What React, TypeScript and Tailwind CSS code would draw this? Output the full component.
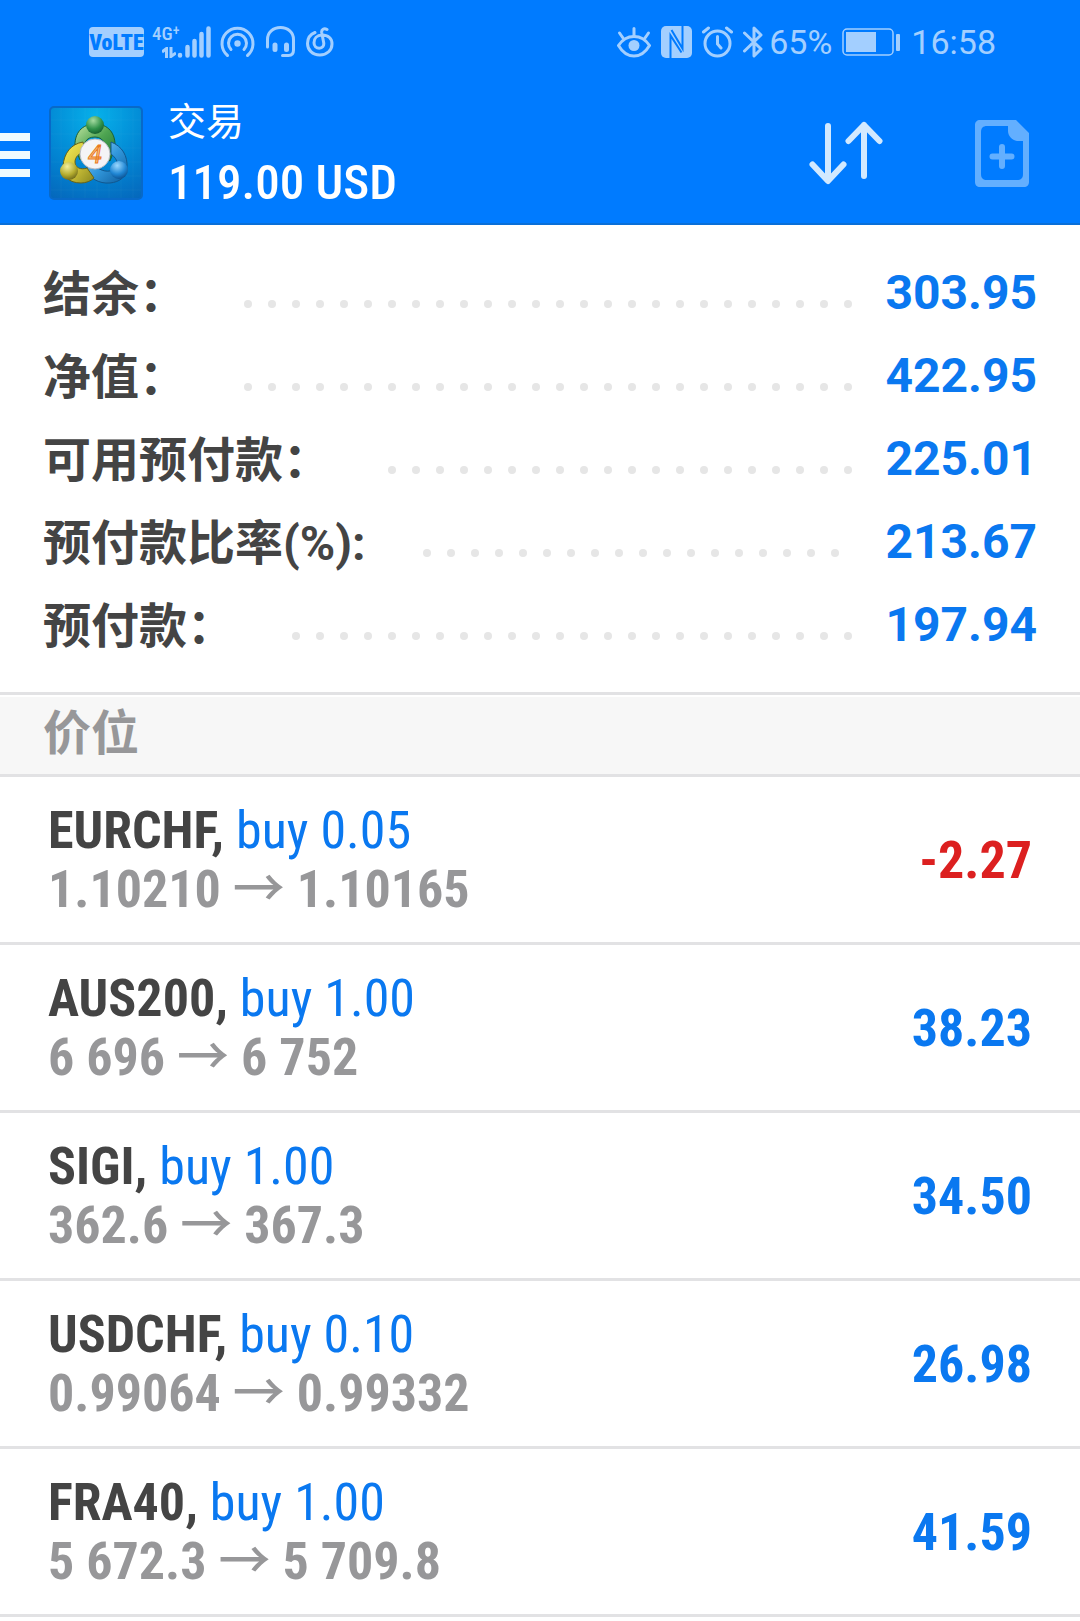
interface BalanceItem {
  label: string;
  value: string;
}

interface Position {
  symbol: string;
  volume: string;
  open: string;
  current: string;
  profit: string;
}

const balance: BalanceItem[] = [
  { label: "结余：", value: "303.95" },
  { label: "净值：", value: "422.95" },
  { label: "可用预付款：", value: "225.01" },
  { label: "预付款比率(%):", value: "213.67" },
  { label: "预付款：", value: "197.94" },
];

const positions: Position[] = [
  { symbol: "EURCHF", volume: "0.05", open: "1.10210", current: "1.10165", profit: "-2.27" },
  { symbol: "AUS200", volume: "1.00", open: "6 696", current: "6 752", profit: "38.23" },
  { symbol: "SIGI", volume: "1.00", open: "362.6", current: "367.3", profit: "34.50" },
  { symbol: "USDCHF", volume: "0.10", open: "0.99064", current: "0.99332", profit: "26.98" },
  { symbol: "FRA40", volume: "1.00", open: "5 672.3", current: "5 709.8", profit: "41.59" },
];

const DataArrowsIcon = () => (
  <svg width="14" height="11" viewBox="0 0 14 11" fill="none" stroke="currentColor" strokeWidth="3">
    <path d="M0 5 4.500 1.500V11M9 0v9.500L14 6" />
  </svg>
);

const SignalIcon = () => (
  <svg width="36" height="32" viewBox="0 0 36 32" fill="none" stroke="currentColor" strokeLinecap="round">
    <path strokeWidth="4.500" d="M4 29v.5M11.500 21v8.500M18.500 15v14.500M25.500 8v21.500M32.500 2.500v27" />
  </svg>
);

const HotspotIcon = () => (
  <svg width="35" height="32" viewBox="0 0 35 32" fill="none" stroke="currentColor" strokeWidth="3" strokeLinecap="round">
    <path d="M7.500 29.500a15.500 15.500 0 1 1 20 0" />
    <path d="M11 23.500a9 9 0 1 1 13 0" />
    <circle cx="17.500" cy="17.500" r="3.200" fill="currentColor" stroke="none" />
  </svg>
);

const HeadsetIcon = () => (
  <svg width="29" height="32" viewBox="0 0 29 32" fill="none" stroke="currentColor" strokeLinecap="round">
    <path strokeWidth="3" d="M1.500 21V13.500C1.500 6.500 7 1.500 14.500 1.500S27.500 6.500 27.500 13.500V24c0 3.500-2 5.500-5 5.500h-6" />
    <path strokeWidth="5" d="M9 19v4.500M20.500 19v4.500" />
  </svg>
);

const MusicIcon = () => (
  <svg width="28" height="30" viewBox="0 0 28 30" fill="none" stroke="currentColor" strokeWidth="3" strokeLinecap="round">
    <path d="M9 5.500C4 7.500 1.500 11.500 1.500 16.500c0 6.500 5 11.500 12.300 11.500S26 23 26 17c0-5.500-4-9-10-9-5 0-8 3.500-8 7.800 0 3.200 2.200 5.400 5.300 5.400s4.900-2.400 4.400-5.400L15.700 5.500c-.4-3 2.300-4.800 5.300-3" />
  </svg>
);

const EyeIcon = () => (
  <svg width="34" height="31" viewBox="0 0 34 31" fill="none" stroke="currentColor" strokeWidth="3" strokeLinecap="round">
    <path d="M1.500 18.500C5 13 10.500 9.500 17 9.500s12 3.500 15.500 9c-3.500 6-9 10.500-15.500 10.500S5 24.500 1.500 18.500z" />
    <circle cx="17" cy="18.500" r="5.500" fill="currentColor" stroke="none" />
    <path d="M17 9V1.500M6 11 2.500 6M28 11l3.500-5" />
  </svg>
);

const NfcIcon = () => (
  <svg width="31" height="32" viewBox="0 0 31 32" fill="none">
    <rect width="31" height="32" rx="5" fill="currentColor" />
    <path d="M9.500 32V9.500L20.500 26.500" stroke="#007bff" strokeWidth="2" />
    <path d="M21.500 0v22.500L10.500 4" stroke="#007bff" strokeWidth="2" />
  </svg>
);

const AlarmIcon = () => (
  <svg width="31" height="32" viewBox="0 0 31 32" fill="none" stroke="currentColor" strokeWidth="3" strokeLinecap="round">
    <circle cx="15.500" cy="17.500" r="12.500" />
    <path d="M15.500 10.500v7.500l3.500 4M1.500 6l5-4M29.500 6l-5-4" />
  </svg>
);

const BluetoothIcon = () => (
  <svg width="20" height="32" viewBox="0 0 20 32" fill="none" stroke="currentColor" strokeWidth="3" strokeLinejoin="round" strokeLinecap="round">
    <path d="M1.500 7 18 23l-7 7V2l7 7L1.500 25" />
  </svg>
);

const BatteryIcon = () => (
  <svg width="59" height="28" viewBox="0 0 59 28" fill="none">
    <rect x="1" y="1" width="50" height="26" rx="4" stroke="currentColor" strokeWidth="1.500" />
    <rect x="4" y="4" width="30" height="20" fill="currentColor" />
    <rect x="54" y="6" width="4" height="17" rx="1" fill="currentColor" />
  </svg>
);

const AppLogo = () => (
  <svg width="94" height="94" viewBox="0 0 94 94" className="shrink-0" aria-label="MetaTrader 4">
    <defs>
      <radialGradient id="tile" cx="0.5" cy="0.1" r="1">
        <stop offset="0" stopColor="#06b0ea" />
        <stop offset="0.6" stopColor="#0284d2" />
        <stop offset="1" stopColor="#0568bc" />
      </radialGradient>
      <linearGradient id="green" x1="0" y1="0" x2="1" y2="1">
        <stop offset="0" stopColor="#c4e6a4" />
        <stop offset="0.5" stopColor="#4fa552" />
        <stop offset="1" stopColor="#1d7434" />
      </linearGradient>
      <linearGradient id="yellow" x1="0" y1="0" x2="1" y2="1">
        <stop offset="0" stopColor="#f8ee58" />
        <stop offset="0.5" stopColor="#d2c53a" />
        <stop offset="1" stopColor="#88861f" />
      </linearGradient>
      <linearGradient id="blue" x1="0" y1="0" x2="1" y2="1">
        <stop offset="0" stopColor="#a0dafa" />
        <stop offset="0.5" stopColor="#3298dc" />
        <stop offset="1" stopColor="#0b5a9c" />
      </linearGradient>
      <radialGradient id="greenHead" cx="0.4" cy="0.25" r="0.8">
        <stop offset="0" stopColor="#a5dba0" />
        <stop offset="0.6" stopColor="#2f9149" />
        <stop offset="1" stopColor="#14592b" />
      </radialGradient>
      <radialGradient id="yellowHead" cx="0.4" cy="0.25" r="0.8">
        <stop offset="0" stopColor="#f4ef9a" />
        <stop offset="0.6" stopColor="#b3ab2e" />
        <stop offset="1" stopColor="#66621a" />
      </radialGradient>
      <radialGradient id="blueHead" cx="0.4" cy="0.25" r="0.8">
        <stop offset="0" stopColor="#9ad8ff" />
        <stop offset="0.6" stopColor="#1f86d4" />
        <stop offset="1" stopColor="#0b4c8a" />
      </radialGradient>
    </defs>
    <rect x="1" y="1" width="92" height="92" rx="4" fill="url(#tile)" stroke="#0869c8" strokeWidth="2" />
    <path d="M12 2v90M24 2v90M36 2v90M48 2v90M60 2v90M72 2v90M84 2v90M2 14h90M2 28h90M2 42h90M2 56h90M2 70h90M2 84h90" stroke="#ffffff" strokeOpacity="0.03" />
    <path d="M26 42C25 27 33 18 46 18s21 9 20 24l-5 13-7-3c4-11 2-21-8-21s-12 7-10 18l-5 5z" fill="url(#green)" stroke="#1c5f35" />
    <path d="M62 36c11 4 17 14 16 26-1 9-7 14-17 15-11 1-21-5-25-14l8-6c5 7 13 10 20 7 6-3 6-10-2-16z" fill="url(#blue)" stroke="#12578e" />
    <path d="M34 36c-12 2-19 11-20 24-1 10 6 17 18 17 5 0 10-2 13-5l-7-10c-6 2-12 0-12-6 0-5 4-9 10-10z" fill="url(#yellow)" stroke="#656219" />
    <circle cx="46" cy="19" r="9" fill="url(#greenHead)" />
    <circle cx="20" cy="65" r="9" fill="url(#yellowHead)" />
    <circle cx="70" cy="64" r="9" fill="url(#blueHead)" />
    <circle cx="46" cy="48" r="15" fill="#f4f4f6" stroke="#b9bcc4" />
    <text x="46" y="57" textAnchor="middle" fontSize="25" fontStyle="italic" fill="#f9c58a" stroke="#ea7a1c" fontFamily="Roboto, sans-serif">
      4
    </text>
  </svg>
);

const StatusBar = () => (
  <div className="flex h-[84px] items-center justify-between pr-[84px] pl-[89px] text-[#a3cfff]">
    <div className="flex items-center">
      <span className="flex h-[30px] w-[55px] items-center justify-center rounded-sm bg-[#a3cfff] pt-0.5 font-['Roboto_Condensed',Roboto,sans-serif] text-[22px] leading-[28px] font-black text-[#007bff]">
        VoLTE
      </span>
      <div className="ml-2 flex h-8 items-end">
        <div className="flex h-8 w-[24px] flex-col items-end justify-between">
          <span className="flex w-[24px] items-start font-['Roboto_Condensed',Roboto,sans-serif] text-[19px] leading-[16px] font-medium">
            4G<span className="text-[14px] leading-[8px]">+</span>
          </span>
          <DataArrowsIcon />
        </div>
        <SignalIcon />
      </div>
      <div className="ml-2 flex items-center gap-[11px]">
        <HotspotIcon />
        <HeadsetIcon />
        <MusicIcon />
      </div>
    </div>
    <div className="flex items-center gap-2.5">
      <EyeIcon />
      <NfcIcon />
      <AlarmIcon />
      <div className="flex items-center gap-1.5">
        <BluetoothIcon />
        <span className="text-[34px]">65%</span>
      </div>
      <BatteryIcon />
      <span className="text-[34px]">16:58</span>
    </div>
  </div>
);

const Header = () => (
  <header className="border-b-2 border-[#0a6fd8] bg-[#007bff] text-white">
    <StatusBar />
    <div className="flex h-[139px] items-start">
      <button type="button" aria-label="Menu" className="mt-[49px] flex w-[30px] flex-col gap-2.5">
        <span className="h-2 w-full bg-[#f0fbff]" />
        <span className="h-2 w-full bg-[#f0fbff]" />
        <span className="h-2 w-full bg-[#f0fbff]" />
      </button>
      <div className="mt-[22px] ml-[19px]">
        <AppLogo />
      </div>
      <div className="mt-3 ml-[25px] flex-1">
        <h1 className="text-[38px] leading-[52px]">交易</h1>
        <p className="font-['Roboto_Condensed',Roboto,sans-serif] text-[49px] leading-[70px] font-medium">119.00 USD</p>
      </div>
      <button type="button" aria-label="Sort" className="mt-[37px] mr-[92px] text-[#d2e9ff]">
        <svg width="74" height="66" viewBox="0 0 74 66" fill="none" stroke="currentColor" strokeWidth="6" strokeLinecap="round" strokeLinejoin="round">
          <path d="M19 5v54M3.500 43.500 19 60l15.500-16.500" />
          <path d="M55 55V4M39.500 20 55 4l15.500 16" />
        </svg>
      </button>
      <button type="button" aria-label="New order" className="mt-[36px] mr-[51px] text-[#63afff]">
        <svg width="54" height="67" viewBox="0 0 54 67" fill="currentColor">
          <path
            fillRule="evenodd"
            d="M5 0h36l13 13v49c0 3-2 5-5 5H5c-3 0-5-2-5-5V5c0-3 2-5 5-5zM12 6c-4 0-6 2-6 6v42c0 4 2 6 6 6h30c4 0 6-2 6-6V21h-6c-5-1-9-5-9-10V6z"
          />
          <path d="M27 27v19M17.500 36.500h19" stroke="currentColor" strokeWidth="6" strokeLinecap="round" />
        </svg>
      </button>
    </div>
  </header>
);

// Dots wrap onto hidden lines, so only whole ones show at any width
const DotLeader = () => (
  <span className="mt-[23px] flex h-2 flex-1 flex-wrap overflow-hidden" aria-hidden="true">
    {Array.from({ length: 60 }, (_, i) => (
      <span key={i} className="flex h-2 w-6 justify-center">
        <span className="size-2 rounded-full bg-[#e6e6e6]" />
      </span>
    ))}
  </span>
);

const BalanceRow = ({ label, value }: BalanceItem) => (
  <div className="flex h-[83px] items-center text-[48px] leading-[83px]">
    <dt className="pt-1 font-bold text-[#444444]">{label}</dt>
    <dd className="ml-[49px] flex flex-1 items-center">
      <DotLeader />
      <span className="ml-5 font-bold text-[#0a78f0]">{value}</span>
    </dd>
  </div>
);

const PositionRow = ({ symbol, volume, open, current, profit }: Position) => (
  <li className="flex items-center justify-between border-b-[3px] border-[#e2e2e4] pt-6 pr-12 pb-[23px] pl-12 text-[52px] leading-[59px]">
    <div>
      <p className="text-[#0a78f0]">
        <span className="font-bold text-[#444444]">{symbol},</span> buy {volume}
      </p>
      <p className="font-bold text-[#979799]">
        {open} <span className="font-medium">→</span> {current}
      </p>
    </div>
    <span className={profit.startsWith("-") ? "font-bold text-[#dc2020]" : "font-bold text-[#0a78f0]"}>{profit}</span>
  </li>
);

export default function App() {
  return (
    <div className="min-h-screen bg-white font-[Roboto,'Noto_Sans_CJK_SC',sans-serif]">
      <Header />
      <main>
        <dl className="border-b-[3px] border-[#e2e2e4] pt-[26px] pr-[43px] pb-[26px] pl-[43px]">
          {balance.map((item) => (
            <BalanceRow key={item.label} {...item} />
          ))}
        </dl>
        <h2 className="mt-[2px] border-b-[3px] border-[#e2e2e4] bg-[#f7f7f7] pb-1 pl-[43px] text-[48px] leading-[73px] font-bold text-[#979799]">
          价位
        </h2>
        <ul className="font-['Roboto_Condensed',Roboto,'Noto_Sans_CJK_SC',sans-serif]">
          {positions.map((position) => (
            <PositionRow key={position.symbol} {...position} />
          ))}
        </ul>
      </main>
    </div>
  );
}
